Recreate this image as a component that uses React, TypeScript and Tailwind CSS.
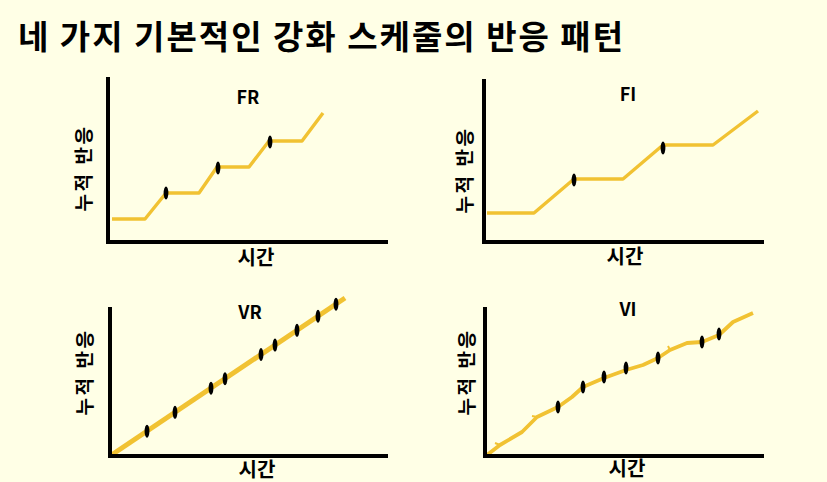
const KR = { fontFamily: '"Noto Sans CJK KR", "Noto Sans", sans-serif' };
const LINE = "#F1C232";

type Pt = [number, number];

interface ChartProps {
  box: string;
  title: string;
  titleX: number;
  titleY: number;
  axisX: number;
  axisTop: number;
  axisY: number;
  axisRight: number;
  yLabel: Pt;
  xLabel: Pt;
  line: Pt[];
  marks: Pt[];
  ticks?: Pt[][];
  width?: number;
}

function Chart(p: ChartProps) {
  const [, , w, h] = p.box.split(" ").map(Number);
  return (
    <svg width={w} height={h} viewBox={p.box} className="block" style={KR}>
      <polyline
        points={p.line.map((q) => q.join(",")).join(" ")}
        fill="none"
        stroke={LINE}
        strokeWidth={p.width ?? 3.4}
        strokeLinejoin="round"
      />
      {p.ticks?.map((t, i) => (
        <polyline key={i} points={t.map((q) => q.join(",")).join(" ")} fill="none" stroke={LINE} strokeWidth={2} />
      ))}
      {p.marks.map(([x, y], i) => (
        <ellipse key={i} cx={x} cy={y} rx={2.4} ry={6.5} fill="#000" />
      ))}
      <path
        d={`M${p.axisX} ${p.axisTop} V${p.axisY} H${p.axisRight}`}
        fill="none"
        stroke="#000"
        strokeWidth={4}
      />
      <text x={p.titleX} y={p.titleY} textAnchor="middle" fontSize={18} fontWeight={700} fill="#000">
        {p.title}
      </text>
      <text
        x={p.yLabel[0]}
        y={p.yLabel[1]}
        textAnchor="middle"
        dominantBaseline="central"
        fontSize={19}
        fontWeight={700}
        letterSpacing={2.5}
        transform={`rotate(-90 ${p.yLabel[0]} ${p.yLabel[1]})`}
      >
        누적 반응
      </text>
      <text x={p.xLabel[0]} y={p.xLabel[1]} textAnchor="middle" dominantBaseline="central" fontSize={20} fontWeight={700}>
        시간
      </text>
    </svg>
  );
}

const vr = (x: number): Pt => [x, 456 - 0.672 * (x - 110)];

export default function App() {
  return (
    <div className="w-[827px] h-[482px] overflow-hidden bg-[#FFFFE6] text-black" style={KR}>
      <div className="h-[68px] pl-[18px] pt-[19px] text-[33px] leading-none font-bold tracking-[2px]">
        네 가지 기본적인 강화 스케줄의 반응 패턴
      </div>
      <div className="grid grid-cols-[413px_414px] grid-rows-[207px_207px]">
        <Chart
          box="0 68 413 207"
          title="FR"
          titleX={248}
          titleY={104}
          axisX={108}
          axisTop={77}
          axisY={242}
          axisRight={388}
          yLabel={[82, 168]}
          xLabel={[256, 256]}
          line={[
            [112, 219], [145, 219], [166, 193], [199, 193], [217, 167],
            [249, 167], [269, 141], [302, 141], [323, 113],
          ]}
          marks={[[166, 193], [218, 168], [270, 142]]}
        />
        <Chart
          box="413 68 414 207"
          title="FI"
          titleX={628}
          titleY={101}
          axisX={484}
          axisTop={79}
          axisY={242}
          axisRight={764}
          yLabel={[463, 170]}
          xLabel={[625, 255]}
          line={[
            [487, 213], [534, 213], [574, 179], [623, 179],
            [663, 145], [713, 145], [758, 111],
          ]}
          marks={[[574, 180], [663, 148]]}
        />
        <Chart
          box="0 275 413 207"
          title="VR"
          titleX={250}
          titleY={319}
          axisX={110}
          axisTop={307}
          axisY={456}
          axisRight={388}
          yLabel={[83, 372]}
          xLabel={[257, 468]}
          width={5}
          line={[[110, 456], [345, 298]]}
          marks={[147, 175, 211, 225, 261, 275, 297, 318, 336].map(vr)}
        />
        <Chart
          box="413 275 414 207"
          title="VI"
          titleX={628}
          titleY={316}
          axisX={485}
          axisTop={307}
          axisY={456}
          axisRight={764}
          yLabel={[465, 372]}
          xLabel={[627, 467]}
          width={3.8}
          line={[
            [487, 455], [500, 445], [522, 432], [537, 417], [558, 407], [572, 397],
            [583, 387], [604, 378], [626, 370], [643, 365], [658, 358], [670, 350],
            [687, 343], [702, 342], [719, 335], [733, 322], [753, 313],
          ]}
          marks={[[558, 407], [583, 387], [604, 377], [626, 368], [658, 358], [702, 342], [719, 334]]}
          ticks={[
            [[500, 445], [495, 443]],
            [[537, 417], [532, 416]],
            [[670, 350], [668, 346]],
          ]}
        />
      </div>
    </div>
  );
}
